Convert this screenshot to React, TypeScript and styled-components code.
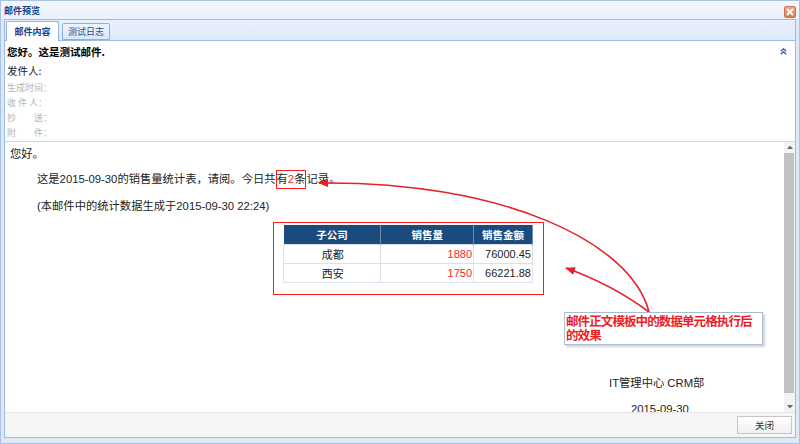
import React from "react";
import styled, { createGlobalStyle } from "styled-components";

const Global = createGlobalStyle`
  html, body { margin: 0; padding: 0; background: #ffffff; }
  body { font-family: "Liberation Sans", "Noto Sans CJK SC", sans-serif; }
  * { box-sizing: border-box; }
`;

const Window = styled.div`
  position: relative;
  width: 800px;
  height: 444px;
  background: #dfe8f6;
  border: 1px solid #a9c2e6;
  padding: 0 3px 5px 3px;
  display: flex;
  flex-direction: column;
  overflow: hidden;
`;

const TitleBar = styled.div`
  height: 18px;
  display: flex;
  align-items: center;
  justify-content: space-between;
  background: linear-gradient(#f3f8fe, #e9f1fb);
  margin: 0 -3px;
  padding: 0 3px;
`;

const TitleText = styled.span`
  font-family: "Noto Sans CJK SC", sans-serif;
  font-size: 9px;
  font-weight: 700;
  color: #15428b;
  padding-top: 1px;
`;

const CloseButton = styled.div`
  width: 12px;
  height: 12px;
  margin-top: 3px;
  border-radius: 2px;
  border: 1px solid #cf7352;
  background: linear-gradient(#f1a98c, #dd7651);
  display: flex;
  align-items: center;
  justify-content: center;
`;

const Panel = styled.div`
  flex: 1;
  min-height: 0;
  border: 1px solid #99bbe8;
  background: #ffffff;
  display: flex;
  flex-direction: column;
`;

const TabStrip = styled.div`
  height: 21px;
  background: linear-gradient(#e8f0fc, #dfe9f8);
  border-bottom: 1px solid #99bbe8;
  display: flex;
  align-items: flex-end;
  padding-left: 1px;
  gap: 3px;
`;

const Tab = styled.div<{ $active?: boolean }>`
  height: ${(p) => (p.$active ? "20px" : "17px")};
  width: ${(p) => (p.$active ? "53px" : "48px")};
  margin-bottom: ${(p) => (p.$active ? "-1px" : "0")};
  border: 1px solid #8db2e3;
  border-bottom: ${(p) => (p.$active ? "none" : "1px solid #8db2e3")};
  border-radius: 2px 2px 0 0;
  background: ${(p) =>
    p.$active ? "#ffffff" : "linear-gradient(#eef4fd, #dbe7f8)"};
  display: flex;
  align-items: center;
  justify-content: center;
  font-family: "Noto Sans CJK SC", sans-serif;
  font-size: 9px;
  font-weight: ${(p) => (p.$active ? 700 : 400)};
  color: ${(p) => (p.$active ? "#15428b" : "#2c4f86")};
`;

const Header = styled.div`
  height: 101px;
  border-bottom: 1px solid #d4d4d4;
  padding: 1px 2px 0 2px;
  display: flex;
  flex-direction: column;
`;

const SubjectRow = styled.div`
  height: 18px;
  display: flex;
  align-items: center;
  justify-content: space-between;
  padding-right: 6px;
`;

const Subject = styled.span`
  font-family: "Noto Sans CJK SC", sans-serif;
  font-size: 10.5px;
  font-weight: 700;
  color: #000000;
`;

const SenderLine = styled.div`
  margin-top: 2px;
  height: 18px;
  line-height: 18px;
  font-family: "Noto Sans CJK SC", sans-serif;
  font-size: 10.5px;
  color: #222222;
`;

const MetaLine = styled.div`
  height: 15px;
  line-height: 15px;
  font-family: "Noto Sans CJK SC", sans-serif;
  font-size: 9px;
  color: #b4b4b4;
  white-space: pre;
`;

const Content = styled.div`
  flex: 1;
  min-height: 0;
  display: flex;
`;

const ScrollArea = styled.div`
  flex: 1;
  overflow: hidden;
  padding: 3px 0 0 5px;
  font-size: 11.3px;
  color: #222222;
`;

const Line = styled.div<{ $indent?: number; $gap?: number }>`
  height: 18px;
  line-height: 18px;
  white-space: nowrap;
  padding-left: ${(p) => p.$indent ?? 0}px;
  margin-top: ${(p) => p.$gap ?? 0}px;
`;

const Boxed = styled.span`
  display: inline-block;
  border: 1px solid #ff1a1a;
  line-height: 17px;
  height: 19px;
  vertical-align: middle;
  margin-top: -2px;
`;

const RedNum = styled.span`
  color: #f02828;
`;

const TableFrame = styled.div`
  margin: 7px 0 0 263px;
  width: 271px;
  height: 73px;
  border: 1px solid #ff1a1a;
  padding: 2px 0 0 9px;
`;

const DataTable = styled.table`
  border-collapse: collapse;
  width: 250px;
  font-size: 11px;
`;

const Th = styled.th<{ $w: number }>`
  width: ${(p) => p.$w}px;
  height: 19px;
  padding: 0;
  background: #1b4b7c;
  color: #ffffff;
  font-family: "Noto Sans CJK SC", sans-serif;
  font-size: 10.5px;
  font-weight: 700;
  border-right: 1px solid #6d8db3;
  text-align: center;
`;

const Td = styled.td<{ $align?: string; $red?: boolean }>`
  height: 19px;
  padding: 0 1px 0 2px;
  border: 1px solid #dde0ea;
  text-align: ${(p) => p.$align ?? "center"};
  color: ${(p) => (p.$red ? "#f02828" : "#222222")};
`;

const Scrollbar = styled.div`
  width: 11px;
  background: #f3f3f3;
  display: flex;
  flex-direction: column;
`;

const ScrollBtn = styled.div`
  height: 10px;
  display: flex;
  align-items: center;
  justify-content: center;
`;

const Track = styled.div`
  flex: 1;
  padding-top: 1px;
`;

const Thumb = styled.div`
  height: 240px;
  margin: 0 1px 0 0;
  background: #c2c2c2;
`;

const Footer = styled.div`
  height: 25px;
  border-top: 1px solid #e6e6e6;
  background: #f5f5f5;
  display: flex;
  align-items: center;
  justify-content: flex-end;
  padding-right: 3px;
`;

const Button = styled.div`
  width: 55px;
  height: 18px;
  border: 1px solid #c6c6c6;
  background: linear-gradient(#ffffff, #f0f0f0);
  display: flex;
  align-items: center;
  justify-content: center;
  font-family: "Noto Sans CJK SC", sans-serif;
  font-size: 9.5px;
  color: #333333;
`;

const Overlay = styled.svg`
  position: absolute;
  left: 0;
  top: 0;
  pointer-events: none;
`;

const Note = styled.div`
  position: absolute;
  left: 563px;
  top: 311px;
  width: 199px;
  height: 33px;
  background: #ffffff;
  border: 1px solid #a9bcd6;
  box-shadow: 2px 2px 2px rgba(0, 0, 0, 0.18);
  padding: 1px 0 0 1px;
  font-family: "Noto Sans CJK SC", sans-serif;
  font-size: 12.5px;
  font-weight: 700;
  letter-spacing: -0.9px;
  line-height: 14px;
  color: #f01c24;
`;

export default function App() {
  return (
    <>
      <Global />
      <Window>
        <TitleBar>
          <TitleText>邮件预览</TitleText>
          <CloseButton>
            <svg width="8" height="8" viewBox="0 0 8 8">
              <path d="M1 1 L7 7 M7 1 L1 7" stroke="#ffffff" strokeWidth="2" />
            </svg>
          </CloseButton>
        </TitleBar>
        <Panel>
          <TabStrip>
            <Tab $active>邮件内容</Tab>
            <Tab>测试日志</Tab>
          </TabStrip>
          <Header>
            <SubjectRow>
              <Subject>您好。这是测试邮件.</Subject>
              <svg width="7" height="7" viewBox="0 0 7 7">
                <path d="M0.8 3.2 L3.5 0.8 L6.2 3.2 M0.8 6.2 L3.5 3.8 L6.2 6.2" stroke="#3f66a6" strokeWidth="1.4" fill="none" />
              </svg>
            </SubjectRow>
            <SenderLine>发件人:</SenderLine>
            <MetaLine>生成时间：</MetaLine>
            <MetaLine>收 件 人：</MetaLine>
            <MetaLine>抄　　送：</MetaLine>
            <MetaLine>附　　件：</MetaLine>
          </Header>
          <Content>
            <ScrollArea>
              <Line>您好。</Line>
              <Line $indent={27} $gap={7}>
                这是2015-09-30的销售量统计表，请阅。今日共
                <Boxed>
                  有<RedNum>2</RedNum>条
                </Boxed>
                记录。
              </Line>
              <Line $indent={27} $gap={9}>
                (本邮件中的统计数据生成于2015-09-30 22:24)
              </Line>
              <TableFrame>
                <DataTable>
                  <thead>
                    <tr>
                      <Th $w={98}>子公司</Th>
                      <Th $w={93}>销售量</Th>
                      <Th $w={59}>销售金额</Th>
                    </tr>
                  </thead>
                  <tbody>
                    <tr>
                      <Td>成都</Td>
                      <Td $align="right" $red>1880</Td>
                      <Td $align="right">76000.45</Td>
                    </tr>
                    <tr>
                      <Td>西安</Td>
                      <Td $align="right" $red>1750</Td>
                      <Td $align="right">66221.88</Td>
                    </tr>
                  </tbody>
                </DataTable>
              </TableFrame>
              <Line $indent={599} $gap={79}>IT管理中心 CRM部</Line>
              <Line $indent={621} $gap={8}>2015-09-30</Line>
            </ScrollArea>
            <Scrollbar>
              <ScrollBtn>
                <svg width="6" height="4" viewBox="0 0 6 4">
                  <path d="M0 4 L3 0.5 L6 4 Z" fill="#6a6a6a" />
                </svg>
              </ScrollBtn>
              <Track>
                <Thumb />
              </Track>
              <ScrollBtn>
                <svg width="6" height="4" viewBox="0 0 6 4">
                  <path d="M0 0 L3 3.5 L6 0 Z" fill="#6a6a6a" />
                </svg>
              </ScrollBtn>
            </Scrollbar>
          </Content>
          <Footer>
            <Button>关闭</Button>
          </Footer>
        </Panel>
        <Overlay width="800" height="444" viewBox="0 0 800 444">
          <defs>
            <marker id="ah" markerWidth="10" markerHeight="8" refX="9" refY="4" orient="auto" markerUnits="userSpaceOnUse">
              <path d="M0 0 L10 4 L0 8 Z" fill="#e8202a" />
            </marker>
          </defs>
          <path d="M648 311 C630 240, 500 180, 318 182" stroke="#e8202a" strokeWidth="1.6" fill="none" markerEnd="url(#ah)" />
          <path d="M648 311 Q612 284, 565 267" stroke="#e8202a" strokeWidth="1.6" fill="none" markerEnd="url(#ah)" />
        </Overlay>
        <Note>邮件正文模板中的数据单元格执行后的效果</Note>
      </Window>
    </>
  );
}
